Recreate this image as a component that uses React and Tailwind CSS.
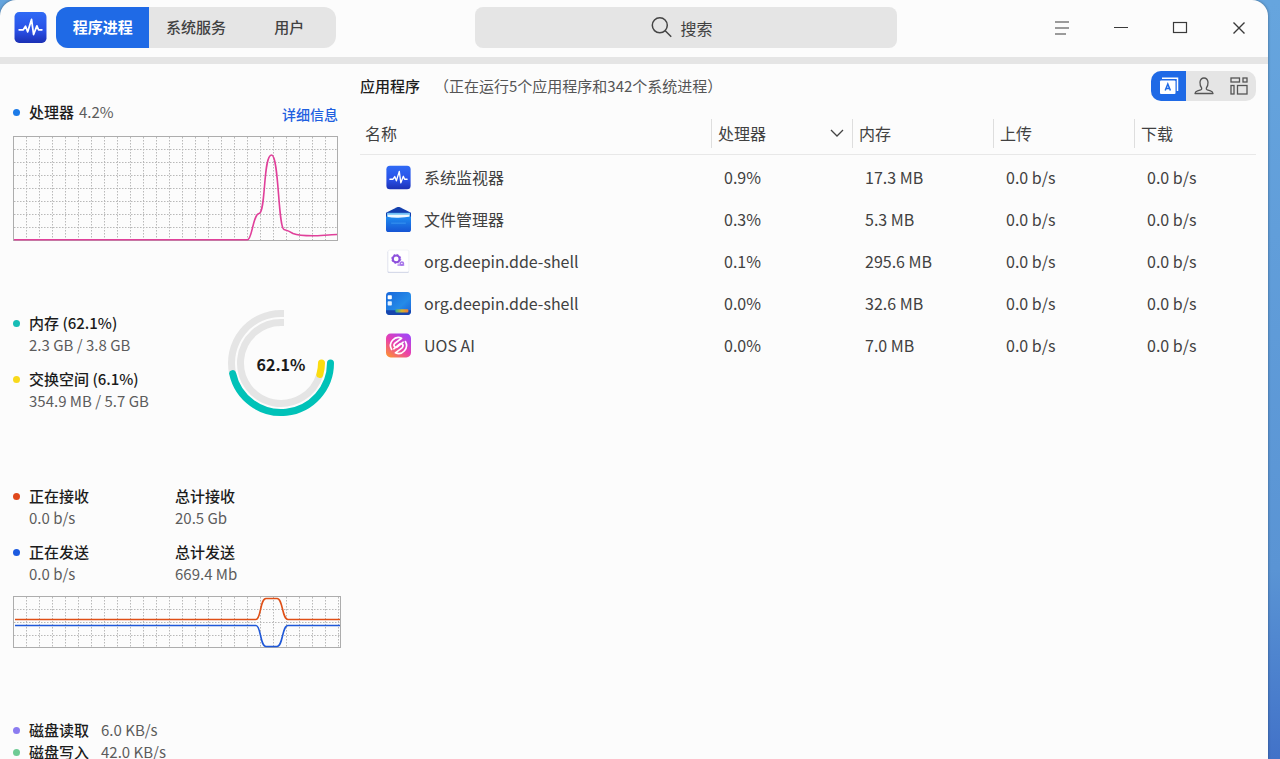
import { useState } from "react";

const range = (n) => Array.from({ length: n }, (_, i) => i);

function MonitorIcon({ className }) {
  return (
    <svg viewBox="0 0 32 32" className={className} aria-hidden="true">
      <defs>
        <linearGradient id="monitor-bg" x1="0" y1="0" x2="0" y2="1">
          <stop offset="0" stopColor="#2f6af5" />
          <stop offset="0.6" stopColor="#2a50e6" />
          <stop offset="1" stopColor="#1b30b4" />
        </linearGradient>
      </defs>
      <rect x="0.5" y="1" width="31" height="30" rx="4.5" fill="url(#monitor-bg)" />
      <path
        d="M5 18.2h4l2.2-3.4 2.1 5.4L17 8.2l2 14.6 3.2-8.4 1.6 3.8H27"
        fill="none"
        stroke="#fff"
        strokeWidth="1.7"
        strokeLinejoin="round"
        strokeLinecap="round"
      />
    </svg>
  );
}

function FilesIcon({ className }) {
  return (
    <svg viewBox="0 0 24 24" className={className} aria-hidden="true">
      <defs>
        <linearGradient id="files-front" x1="0" y1="0" x2="0" y2="1">
          <stop offset="0" stopColor="#1f8cf0" />
          <stop offset="1" stopColor="#1654d4" />
        </linearGradient>
      </defs>
      <path d="M0 5.500 10.600.200q1.400-.6 2.800 0L24 5.500V13H0z" fill="#123fae" />
      <path d="M1 5.600h22V12H1z" fill="#6fc0f5" />
      <path d="M1.500 7.400h21L22 11H2z" fill="#f0f9ff" />
      <path d="M0 9.200q6 1.400 12 1.200t12-1.200v12.300Q24 24 21.500 24h-19Q0 24 0 21.500z" fill="url(#files-front)" />
      <path d="M5 15.500h14" stroke="#3f9cf3" strokeWidth="0.800" />
    </svg>
  );
}

function ShellGearIcon({ className }) {
  return (
    <svg viewBox="0 0 24 24" className={className} aria-hidden="true">
      <rect x="1.500" y="1.500" width="20.500" height="21.500" rx="1.500" fill="#cfd4e6" />
      <rect x="2" y="1" width="20" height="21" rx="1.500" fill="#fff" stroke="#eceef4" strokeWidth="0.6" />
      <circle cx="9.800" cy="9.500" r="3.300" fill="none" stroke="#8d4fdc" strokeWidth="2" />
      <circle cx="9.800" cy="9.500" r="4.400" fill="none" stroke="#8d4fdc" strokeWidth="0.800" strokeDasharray="1.700 1.756" />
      <circle cx="15.200" cy="14" r="1.500" fill="none" stroke="#a877ea" strokeWidth="1.600" />
      <path d="M11 15.400h6.500" stroke="#a877ea" strokeWidth="1.300" />
    </svg>
  );
}

function DesktopIcon({ className }) {
  return (
    <svg viewBox="0 0 24 24" className={className} aria-hidden="true">
      <defs>
        <linearGradient id="desktop-bg" x1="0" y1="0" x2="1" y2="1">
          <stop offset="0" stopColor="#1767db" />
          <stop offset="0.6" stopColor="#258be8" />
          <stop offset="1" stopColor="#1b5ed6" />
        </linearGradient>
        <linearGradient id="desktop-dock" x1="0" y1="0" x2="1" y2="0">
          <stop offset="0" stopColor="#2fae8f" />
          <stop offset="0.5" stopColor="#d6b52c" />
          <stop offset="1" stopColor="#f07a3c" />
        </linearGradient>
      </defs>
      <rect x="0" y="1" width="24" height="22" rx="3.500" fill="url(#desktop-bg)" />
      <path d="M0 18.500h24v1q0 3.500-3.500 3.500h-17Q0 23 0 19.500z" fill="#1746ae" />
      <rect x="1.600" y="4" width="4" height="4" rx="0.700" fill="#fff" />
      <rect x="1.600" y="9.800" width="4" height="4" rx="0.700" fill="#e3f1ff" />
      <rect x="9" y="17.600" width="12.500" height="3" rx="1" fill="url(#desktop-dock)" />
    </svg>
  );
}

function UosAiIcon({ className }) {
  return (
    <svg viewBox="0 0 24 24" className={className} aria-hidden="true">
      <defs>
        <linearGradient id="ai-bg" x1="0.850" y1="0.100" x2="0.200" y2="1">
          <stop offset="0" stopColor="#a646f2" />
          <stop offset="0.5" stopColor="#ea3fae" />
          <stop offset="1" stopColor="#fb8a3c" />
        </linearGradient>
      </defs>
      <rect x="0" y="0.500" width="24" height="23" rx="4.500" fill="url(#ai-bg)" />
      <g fill="none" stroke="#fff" strokeWidth="1.600" strokeLinecap="round" strokeLinejoin="round">
        <path d="M5.400 15.800A7.600 7.600 0 0 1 15 5L8.600 9.800Q6.800 11.600 8.300 13.300q1.500 1 3-.3l5.200-4.200" />
        <path d="M18.600 8.200A7.600 7.600 0 0 1 9 19l6.400-4.800q1.800-1.800.3-3.500-1.500-1-3 .3l-5.200 4.200" />
      </g>
    </svg>
  );
}

function Grid({ width, height }) {
  const cols = range(Math.ceil(width / 13) - 1).map((i) => (i + 1) * 13);
  const rows = range(Math.ceil(height / 13) - 1).map((i) => (i + 1) * 13);
  return (
    <g stroke="#b9b9b9" strokeWidth="1" strokeDasharray="1.500 1.500">
      {cols.map((x) => (
        <path key={`c${x}`} d={`M${x + 0.5} 1V${height - 1}`} />
      ))}
      {rows.map((y) => (
        <path key={`r${y}`} d={`M1 ${y + 0.5}H${width - 1}`} />
      ))}
    </g>
  );
}

function CpuChart() {
  return (
    <svg width="325" height="105" viewBox="0 0 325 105" className="block" role="img" aria-label="处理器">
      <Grid width={325} height={105} />
      <rect x="0.5" y="0.5" width="324" height="104" fill="none" stroke="#adadad" />
      <path
        d="M1 103.800H234.500C239 103.800 240 78.500 246 77.500C253 76.500 250 19 258.500 19C266 19 265 91 271 93.500C275 94.500 277 95.500 280 97.500C285 99.500 295 99.800 300 99.800C307 99.800 315 98.700 324 98.500"
        fill="none"
        stroke="#e0409a"
        strokeWidth="1.600"
      />
    </svg>
  );
}

function NetworkChart() {
  return (
    <svg width="328" height="52" viewBox="0 0 328 52" className="block" role="img" aria-label="网络">
      <Grid width={328} height={52} />
      <rect x="0.5" y="0.5" width="327" height="51" fill="none" stroke="#adadad" />
      <path
        d="M2 23.500H243C248 23.500 247 2.500 253 2.500H264C270 2.500 269 23.500 275 23.500H327"
        fill="none"
        stroke="#df4f16"
        strokeWidth="1.600"
      />
      <path
        d="M2 29.500H243C248 29.500 247 50.500 253 50.500H264C270 50.500 269 29.500 275 29.500H327"
        fill="none"
        stroke="#1f58d8"
        strokeWidth="1.600"
      />
    </svg>
  );
}

function ringPoint(radius, degrees) {
  const a = (degrees * Math.PI) / 180;
  return `${54 + radius * Math.cos(a)} ${56 + radius * Math.sin(a)}`;
}

function Ring({ radius, percent, color }) {
  const sweep = 2.7 * percent;
  return (
    <g fill="none" strokeWidth="7">
      <path
        d={`M${ringPoint(radius, sweep)}A${radius} ${radius} 0 ${270 - sweep > 180 ? 1 : 0} 1 54 ${56 - radius}h3`}
        stroke="#e5e5e5"
      />
      <path
        d={`M${ringPoint(radius, 0)}A${radius} ${radius} 0 0 1 ${ringPoint(radius, sweep)}`}
        stroke={color}
        strokeLinecap="round"
      />
    </g>
  );
}

function MemoryDonut() {
  return (
    <svg width="108" height="110" viewBox="0 0 108 110" className="block" role="img" aria-label="内存 62.1%">
      <Ring radius={49.5} percent={62.1} color="#00c2b8" />
      <Ring radius={40.5} percent={6.1} color="#fbdc10" />
      <text x="54" y="64" textAnchor="middle" fontSize="16" fontWeight="700" fill="#1c1c1c">
        62.1%
      </text>
    </svg>
  );
}

function Stat({ dot, label, value }) {
  return (
    <div className="flex gap-[9px]">
      {dot && <span className={`mt-2 size-[7px] shrink-0 rounded-full ${dot}`} />}
      <dl>
        <dt className="font-medium text-[#1c1c1c]">{label}</dt>
        <dd>{value}</dd>
      </dl>
    </div>
  );
}

function InlineStat({ dot, label, value, gap }) {
  return (
    <dl className="flex items-center">
      <span className={`mr-[9px] size-[7px] rounded-full ${dot}`} />
      <dt className="font-medium text-[#1c1c1c]">{label}</dt>
      <dd className={gap}>{value}</dd>
    </dl>
  );
}

const tabs = ["程序进程", "系统服务", "用户"];

function WindowControl({ label, children }) {
  return (
    <button type="button" aria-label={label} className="flex h-[55px] w-[59px] items-center justify-center">
      <svg width="16" height="16" viewBox="0 0 16 16" fill="none" stroke="#3a3a3a" strokeWidth="1.200">
        {children}
      </svg>
    </button>
  );
}

function TitleBar() {
  const [active, setActive] = useState(0);
  return (
    <header className="flex shrink-0 items-center justify-between border-b-[7px] border-[#e5e5e5] pb-[2px] pl-[14px]">
      <div className="flex items-center gap-[9px]">
        <MonitorIcon className="size-[33px]" />
        <nav className="grid h-[41px] w-[280px] grid-cols-3 overflow-hidden rounded-xl bg-[#e5e5e5] text-[15px]">
          {tabs.map((tab, i) => (
            <button
              key={tab}
              type="button"
              onClick={() => setActive(i)}
              className={i === active ? "bg-[#1f6ae6] font-bold text-white" : "font-medium text-[#414141]"}
            >
              {tab}
            </button>
          ))}
        </nav>
      </div>
      <label className="ml-1 flex h-[41px] w-[422px] items-center justify-center gap-2 rounded-lg bg-[#e5e5e5] pr-2">
        <svg width="21" height="21" viewBox="0 0 21 21" fill="none" stroke="#444" strokeWidth="1.500" aria-hidden="true">
          <circle cx="8.800" cy="8.300" r="7.500" />
          <path d="m14.200 13.700 6 6" />
        </svg>
        <input
          type="search"
          aria-label="搜索"
          placeholder="搜索"
          className="field-sizing-content bg-transparent text-base outline-none placeholder:text-[#414141]"
        />
      </label>
      <div className="flex">
        <WindowControl label="菜单">
          <path d="M1 2h14M1 8h14M1 14h11" />
        </WindowControl>
        <WindowControl label="最小化">
          <path d="M1 7.500h14" />
        </WindowControl>
        <WindowControl label="最大化">
          <rect x="1.500" y="2.500" width="13" height="10" />
        </WindowControl>
        <WindowControl label="关闭">
          <path d="m2.500 2.500 11 11M13.500 2.500l-11 11" strokeWidth="1.400" />
        </WindowControl>
      </div>
    </header>
  );
}

function Sidebar() {
  return (
    <aside className="w-[348px] shrink-0 overflow-hidden pt-9 pl-[13px] text-[15px] leading-[22px] text-[#5c5c5c]">
      <section>
        <div className="flex items-center justify-between pr-[10px]">
          <InlineStat dot="bg-[#1c7be8]" label="处理器" value="4.2%" gap="ml-[5px]" />
          <a href="#details" className="pt-1 text-sm font-medium text-[#1f5fe0]">
            详细信息
          </a>
        </div>
        <div className="mt-3">
          <CpuChart />
        </div>
      </section>

      <section className="mt-[66px] flex items-center justify-between pr-[13px]">
        <div className="grid gap-3">
          <Stat dot="bg-[#17bdb6]" label="内存 (62.1%)" value="2.3 GB / 3.8 GB" />
          <Stat dot="bg-[#f8d91c]" label="交换空间 (6.1%)" value="354.9 MB / 5.7 GB" />
        </div>
        <MemoryDonut />
      </section>

      <section className="mt-[68px]">
        <div className="grid grid-cols-[162px_1fr] gap-y-3">
          <Stat dot="bg-[#e0481c]" label="正在接收" value="0.0 b/s" />
          <Stat label="总计接收" value="20.5 Gb" />
          <Stat dot="bg-[#1c5be0]" label="正在发送" value="0.0 b/s" />
          <Stat label="总计发送" value="669.4 Mb" />
        </div>
        <div className="mt-[11px]">
          <NetworkChart />
        </div>
      </section>

      <section className="mt-[71px]">
        <InlineStat dot="bg-[#8b7cf0]" label="磁盘读取" value="6.0 KB/s" gap="ml-3" />
        <InlineStat dot="bg-[#6fcb95]" label="磁盘写入" value="42.0 KB/s" gap="ml-3" />
      </section>
    </aside>
  );
}

const views = [
  {
    label: "应用程序",
    icon: (
      <svg width="20" height="18" viewBox="0 0 20 18" aria-hidden="true">
        <path d="M3 1.200h15.500V14" fill="none" stroke="#fff" strokeWidth="1.500" />
        <rect x="1" y="3.500" width="15.500" height="13.500" rx="1" fill="#fff" />
        <path d="m6.200 13.500 2.600-6.500 2.600 6.500M7.100 11.500h3.400" fill="none" stroke="#1f6ae6" strokeWidth="1.500" />
      </svg>
    ),
  },
  {
    label: "我的进程",
    icon: (
      <svg width="20" height="18" viewBox="0 0 20 18" fill="none" stroke="#555" strokeWidth="1.300" aria-hidden="true">
        <path
          d="M1 16.500q.2-2 2.500-2.700l3.200-1q1.300-.5 1-1.700Q5.800 8.500 6 5.200 6.500 1 10 1t4 4.200q.2 3.300-1.700 5.900-.3 1.200 1 1.700l3.200 1q2.300.7 2.500 2.700z"
          strokeLinejoin="round"
        />
      </svg>
    ),
  },
  {
    label: "所有进程",
    icon: (
      <svg width="18" height="18" viewBox="0 0 18 18" fill="none" stroke="#555" strokeWidth="1.300" aria-hidden="true">
        <rect x="1" y="1" width="8.500" height="4" />
        <rect x="13" y="1" width="4" height="4" />
        <rect x="1" y="8.500" width="3" height="8.500" />
        <rect x="7.500" y="8.500" width="9.500" height="8.500" />
      </svg>
    ),
  },
];

function ViewSwitch() {
  const [active, setActive] = useState(0);
  return (
    <div className="flex overflow-hidden rounded-[10px] bg-[#e5e5e5]">
      {views.map((view, i) => (
        <button
          key={view.label}
          type="button"
          aria-label={view.label}
          aria-pressed={i === active}
          onClick={() => setActive(i)}
          className={`flex h-[30px] w-[35px] items-center justify-center ${i === active ? "bg-[#1f6ae6]" : ""}`}
        >
          {view.icon}
        </button>
      ))}
    </div>
  );
}

const columns = ["处理器", "内存", "上传", "下载"];

const processes = [
  { Icon: MonitorIcon, name: "系统监视器", values: ["0.9%", "17.3 MB", "0.0 b/s", "0.0 b/s"] },
  { Icon: FilesIcon, name: "文件管理器", values: ["0.3%", "5.3 MB", "0.0 b/s", "0.0 b/s"] },
  { Icon: ShellGearIcon, name: "org.deepin.dde-shell", values: ["0.1%", "295.6 MB", "0.0 b/s", "0.0 b/s"] },
  { Icon: DesktopIcon, name: "org.deepin.dde-shell", values: ["0.0%", "32.6 MB", "0.0 b/s", "0.0 b/s"] },
  { Icon: UosAiIcon, name: "UOS AI", values: ["0.0%", "7.0 MB", "0.0 b/s", "0.0 b/s"] },
];

function ProcessTable() {
  return (
    <table className="w-full table-fixed border-collapse text-left text-base text-[#414141]">
      <colgroup>
        <col />
        <col className="w-[141px]" />
        <col className="w-[141px]" />
        <col className="w-[141px]" />
        <col className="w-[122px]" />
      </colgroup>
      <thead>
        <tr className="h-[41px] border-b border-[#e8e8e8]">
          <th scope="col" className="p-0 pl-[5px] font-normal">
            名称
          </th>
          {columns.map((column, i) => (
            <th key={column} scope="col" className="p-0 font-normal">
              <button
                type="button"
                className="flex h-[29px] w-full items-center justify-between border-l border-[#dedede] pr-2 pl-[6px]"
              >
                {column}
                {i === 0 && (
                  <svg width="14" height="8" viewBox="0 0 14 8" fill="none" stroke="#444" strokeWidth="1.300" aria-hidden="true">
                    <path d="m1 1 6 6 6-6" />
                  </svg>
                )}
              </button>
            </th>
          ))}
        </tr>
      </thead>
      <tbody>
        <tr aria-hidden="true" className="h-[2px]" />
        {processes.map(({ Icon, name, values }, row) => (
          <tr key={row} className="h-[42px]">
            <td className="p-0 pl-[26px]">
              <div className="flex items-center gap-[13px]">
                <Icon className="size-[25px] shrink-0" />
                {name}
              </div>
            </td>
            {values.map((value, i) => (
              <td key={i} className="p-0 pl-[13px]">
                {value}
              </td>
            ))}
          </tr>
        ))}
      </tbody>
    </table>
  );
}

export default function App() {
  return (
    <div className="h-screen overflow-hidden bg-linear-to-b from-[#66a5de] via-[#5a94d4] via-75% to-[#4272c8] pr-3 font-['Noto_Sans_CJK_SC',sans-serif]">
      <div className="flex h-full flex-col overflow-hidden rounded-t-2xl bg-[#fcfcfc] shadow-[0_0_3px_rgba(0,0,0,0.4)]">
        <TitleBar />
        <div className="flex min-h-0 flex-1">
          <Sidebar />
          <main className="min-w-0 flex-1 overflow-hidden pt-[7px] pr-3 pl-3">
            <div className="mb-3 flex items-center justify-between text-[15px]">
              <h1 className="font-medium text-[#1c1c1c]">
                应用程序
                <span className="ml-[14px] font-normal text-[#555]">（正在运行5个应用程序和342个系统进程）</span>
              </h1>
              <ViewSwitch />
            </div>
            <ProcessTable />
          </main>
        </div>
      </div>
    </div>
  );
}
